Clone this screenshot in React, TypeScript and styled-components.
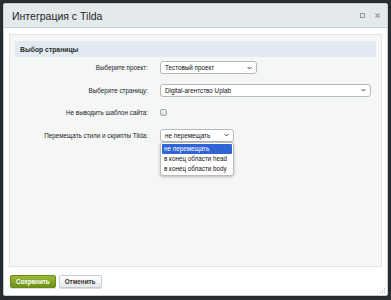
import React from "react";
import styled, { createGlobalStyle } from "styled-components";

const GlobalStyle = createGlobalStyle`
  html, body {
    margin: 0;
    padding: 0;
    background: #2c3136;
  }
  body {
    font-family: "Liberation Sans", Arial, sans-serif;
  }
  * {
    box-sizing: border-box;
  }
`;

const Page = styled.div`
  width: 391px;
  height: 300px;
  padding: 3px;
`;

const Dialog = styled.div`
  width: 385px;
  height: 293px;
  background: #ffffff;
  border: 1px solid #c9d0d5;
  border-radius: 2px;
  display: flex;
  flex-direction: column;
  position: relative;
  box-shadow: 0 0 4px rgba(0, 0, 0, 0.4);
`;

const TitleBar = styled.div`
  height: 24px;
  flex: none;
  background: #e4e9ec;
  border-bottom: 1px solid #c6ccd0;
  display: flex;
  align-items: center;
  padding: 0 7px 0 8px;
`;

const Title = styled.div`
  flex: 1;
  font-size: 10.5px;
  color: #222;
`;

const TitleIcons = styled.div`
  display: flex;
  gap: 10px;
  align-items: center;
`;

const Body = styled.div`
  flex: 1;
  padding: 6px 5px 0 5px;
  display: flex;
`;

const Panel = styled.div`
  flex: 1;
  background: #f5f7f7;
  border: 1px solid #dfe5e8;
  padding: 6px 5px;
  position: relative;
`;

const SectionHeader = styled.div`
  height: 16px;
  background: #e2ebf3;
  display: flex;
  align-items: center;
  padding-left: 5px;
  font-size: 6.8px;
  font-weight: bold;
  color: #2b2b2b;
`;

const Form = styled.div`
  display: grid;
  grid-template-columns: 133px 1fr;
  column-gap: 12px;
  row-gap: 9.5px;
  margin-top: 4px;
  align-items: center;
`;

const Label = styled.div`
  text-align: right;
  font-size: 6.3px;
  color: #222;
`;

const Control = styled.div`
  height: 13px;
  display: flex;
  align-items: center;
  position: relative;
`;

const Select = styled.div<{ $w: number }>`
  width: ${(p) => p.$w}px;
  height: 13px;
  background: #fff;
  border: 1px solid #b4b8bb;
  border-radius: 3px;
  display: flex;
  align-items: center;
  justify-content: space-between;
  padding: 0 4px 0 4px;
  font-size: 6.3px;
  color: #111;
`;

const Checkbox = styled.div`
  width: 7px;
  height: 7px;
  border: 1px solid #a3a8ac;
  border-radius: 2px;
  background: linear-gradient(#f2f2f2, #d8dadc);
`;

const Listbox = styled.div`
  position: absolute;
  left: 0;
  top: 13px;
  width: 74px;
  background: #fff;
  border: 1px solid #b9bdc0;
  border-radius: 3px;
  box-shadow: 0 1px 3px rgba(0, 0, 0, 0.25);
  padding: 1px;
  z-index: 2;
`;

const Option = styled.div<{ $active?: boolean }>`
  height: 10px;
  display: flex;
  align-items: center;
  padding-left: 2px;
  font-size: 6.3px;
  border-radius: 1px;
  color: ${(p) => (p.$active ? "#fff" : "#111")};
  background: ${(p) => (p.$active ? "#2f63d6" : "transparent")};
`;

const Footer = styled.div`
  flex: none;
  display: flex;
  gap: 3px;
  padding: 8px 6px 7px 6px;
`;

const Button = styled.button<{ $primary?: boolean }>`
  height: 13px;
  padding: 0 ${(p) => (p.$primary ? 5 : 5)}px;
  border-radius: 2px;
  font-family: "Liberation Sans", Arial, sans-serif;
  font-size: 6.3px;
  font-weight: bold;
  cursor: pointer;
  color: ${(p) => (p.$primary ? "#fff" : "#333")};
  border: 1px solid ${(p) => (p.$primary ? "#6a8a16" : "#c6ccd0")};
  background: ${(p) =>
    p.$primary
      ? "linear-gradient(#9ab83a, #6f921c)"
      : "linear-gradient(#ffffff, #e4e8ea)"};
  box-shadow: 0 1px 1px rgba(0, 0, 0, 0.15);
`;

const Grip = styled.svg`
  position: absolute;
  right: 1px;
  bottom: 1px;
`;

const Chevron = () => (
  <svg width="5" height="4" viewBox="0 0 5 4">
    <path d="M0.6 1 L2.5 3 L4.4 1" fill="none" stroke="#333" strokeWidth="0.9" />
  </svg>
);

export default function App() {
  return (
    <>
      <GlobalStyle />
      <Page>
        <Dialog>
          <TitleBar>
            <Title>Интеграция с Tilda</Title>
            <TitleIcons>
              <svg width="5" height="5" viewBox="0 0 5 5">
                <rect x="0.5" y="0.5" width="4" height="4" fill="none" stroke="#8e9ba6" strokeWidth="1" />
              </svg>
              <svg width="5" height="5" viewBox="0 0 5 5">
                <path d="M0.5 0.5 L4.5 4.5 M4.5 0.5 L0.5 4.5" stroke="#8e9ba6" strokeWidth="1.1" />
              </svg>
            </TitleIcons>
          </TitleBar>
          <Body>
            <Panel>
              <SectionHeader>Выбор страницы</SectionHeader>
              <Form>
                <Label>Выберите проект:</Label>
                <Control>
                  <Select $w={97}>
                    <span>Тестовый проект</span>
                    <Chevron />
                  </Select>
                </Control>
                <Label>Выберите страницу:</Label>
                <Control>
                  <Select $w={211}>
                    <span>Digital-агентство Uplab</span>
                    <Chevron />
                  </Select>
                </Control>
                <Label>Не выводить шаблон сайта:</Label>
                <Control>
                  <Checkbox />
                </Control>
                <Label>Перемещать стили и скрипты Tilda:</Label>
                <Control>
                  <Select $w={74}>
                    <span>не перемещать</span>
                    <Chevron />
                  </Select>
                  <Listbox>
                    <Option $active>не перемещать</Option>
                    <Option>в конец области head</Option>
                    <Option>в конец области body</Option>
                  </Listbox>
                </Control>
              </Form>
            </Panel>
          </Body>
          <Footer>
            <Button $primary>Сохранить</Button>
            <Button>Отменить</Button>
          </Footer>
          <Grip width="7" height="7" viewBox="0 0 7 7">
            <rect x="5" y="1" width="1" height="1" fill="#b5bcc2" />
            <rect x="3" y="3" width="1" height="1" fill="#b5bcc2" />
            <rect x="5" y="3" width="1" height="1" fill="#b5bcc2" />
            <rect x="1" y="5" width="1" height="1" fill="#b5bcc2" />
            <rect x="3" y="5" width="1" height="1" fill="#b5bcc2" />
            <rect x="5" y="5" width="1" height="1" fill="#b5bcc2" />
          </Grip>
        </Dialog>
      </Page>
    </>
  );
}
